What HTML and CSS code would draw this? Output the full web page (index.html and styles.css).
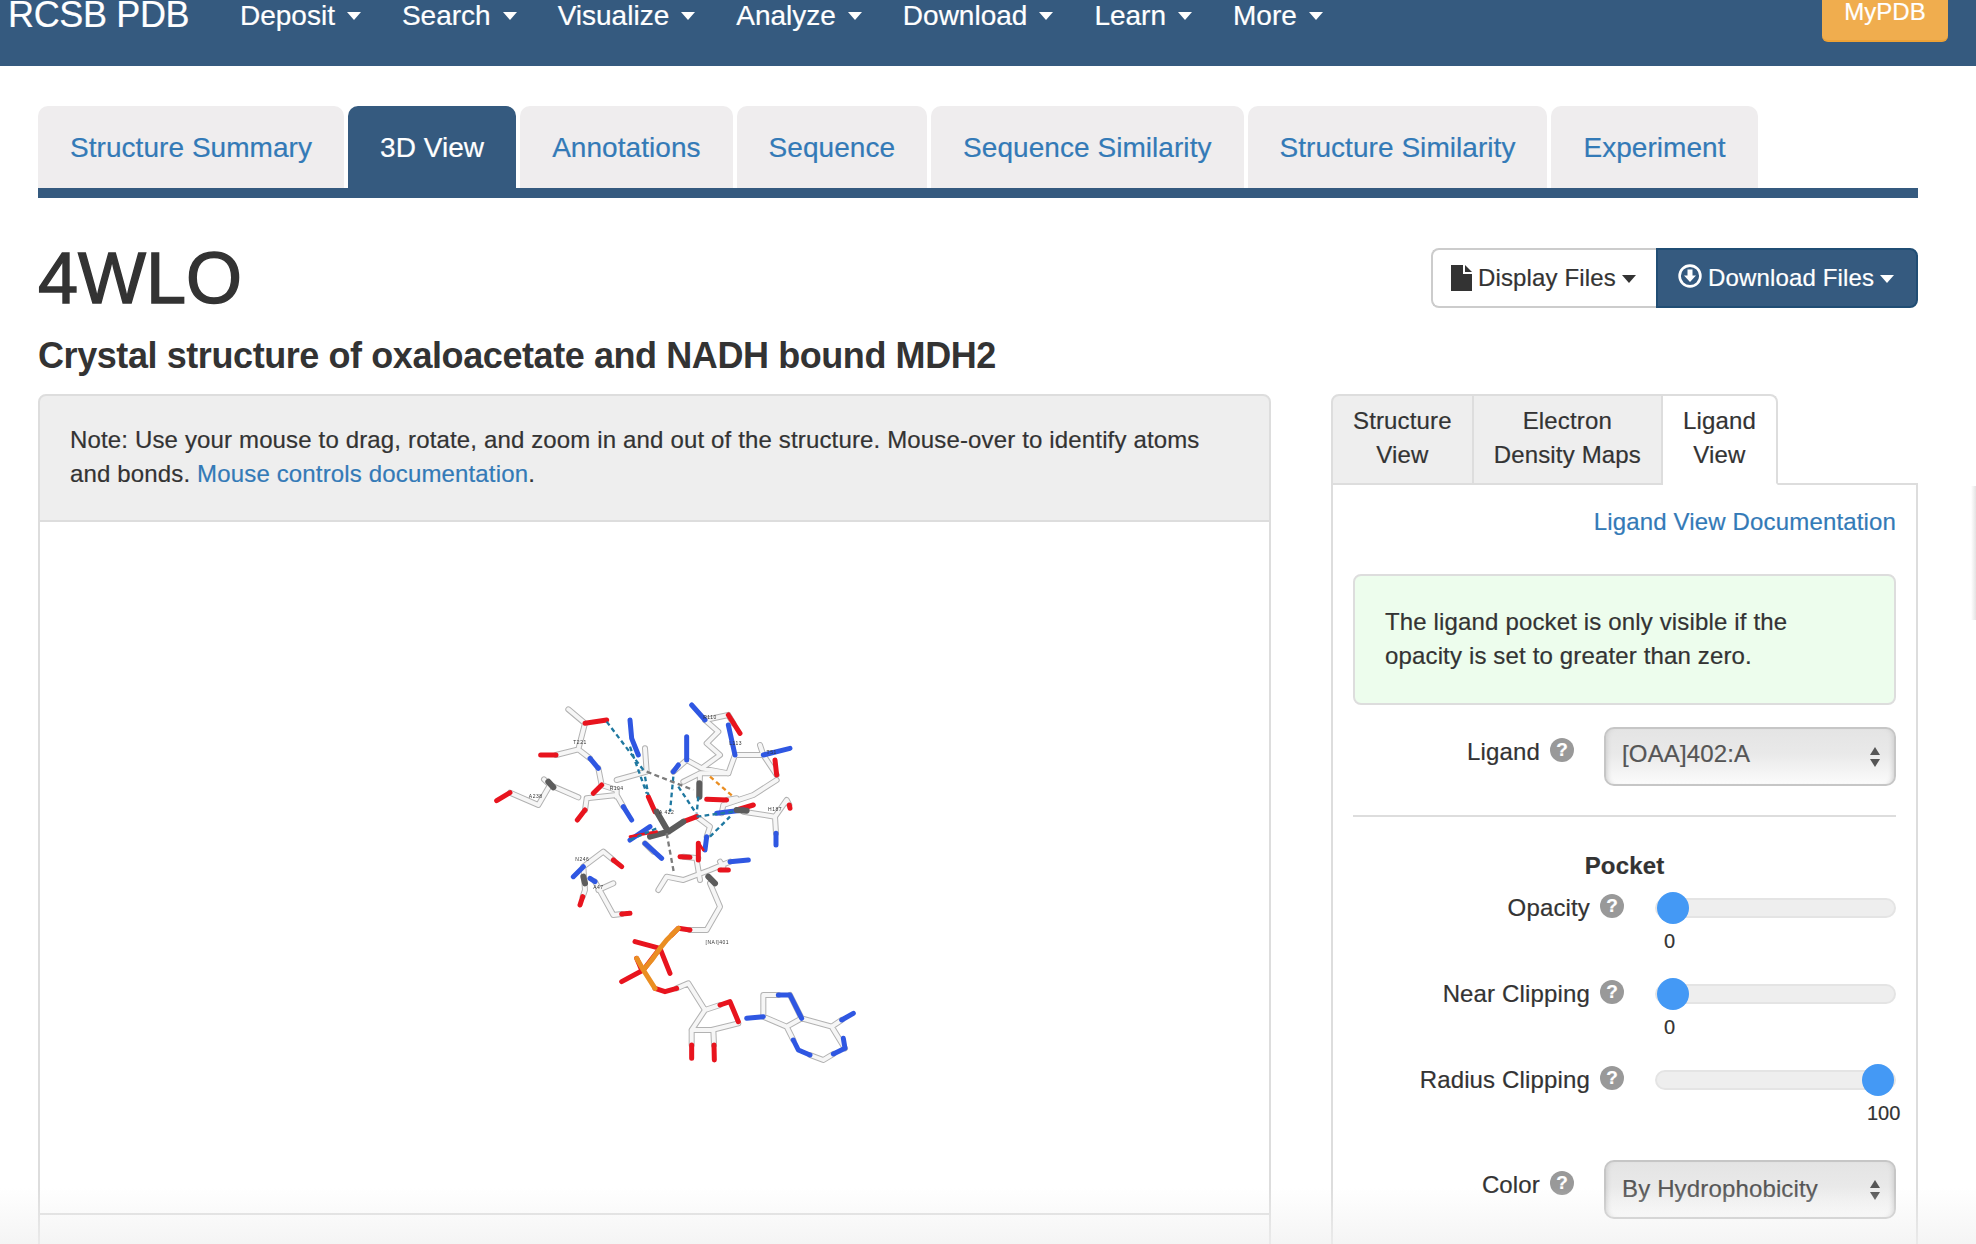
FILE: index.html
```html
<!DOCTYPE html>
<html lang="en">
<head>
<meta charset="utf-8">
<title>4WLO - RCSB PDB</title>
<link rel="stylesheet" href="styles.css">
</head>
<body>
<div class="page">
  <nav class="nav">
    <a class="brand">RCSB PDB</a>
    <ul class="menu">
      <li>Deposit<i class="caret"></i></li>
      <li>Search<i class="caret"></i></li>
      <li>Visualize<i class="caret"></i></li>
      <li>Analyze<i class="caret"></i></li>
      <li>Download<i class="caret"></i></li>
      <li>Learn<i class="caret"></i></li>
      <li>More<i class="caret"></i></li>
    </ul>
    <a class="mypdb">MyPDB</a>
  </nav>

  <main class="container">
    <ul class="main-tabs">
      <li>Structure Summary</li>
      <li class="active">3D View</li>
      <li>Annotations</li>
      <li>Sequence</li>
      <li>Sequence Similarity</li>
      <li>Structure Similarity</li>
      <li>Experiment</li>
    </ul>

    <header class="head">
      <div>
        <h1>4WLO</h1>
        <h2>Crystal structure of oxaloacetate and NADH bound MDH2</h2>
      </div>
      <div class="btn-group">
        <a class="btn btn-light">
          <svg class="ico-file" viewBox="0 0 21 26"><path d="M0 0H12V9H21V26H0Z"/><path d="M14 0L21 7H14Z"/></svg>
          Display Files<i class="caret caret-dark"></i>
        </a>
        <a class="btn btn-dark">
          <svg class="ico-dl" viewBox="0 0 24 24"><circle cx="12" cy="12" r="10.4" fill="none" stroke="#fff" stroke-width="2.6"/><path d="M9.5 5.5H14.500V11.500H18L12 18L6 11.500H9.500Z" fill="#fff"/></svg>
          Download Files<i class="caret"></i>
        </a>
      </div>
    </header>

    <div class="columns">
      <section class="viewer">
        <div class="viewer-note">Note: Use your mouse to drag, rotate, and zoom in and out of the structure. Mouse-over to identify atoms<br>and bonds. <a class="link">Mouse controls documentation</a>.</div>
        <div class="viewer-stage">
          <svg class="mol" viewBox="0 0 1200 1200">
            <defs>
              <g id="sticks">
                <path d="M295 88L345 130L325 208L258 225M325 208L360 235M385 265L395 315L440 330L440 350M350 355L440 345L460 380M350 355L345 390"/>
                <path d="M120 338L205 375L240 315L325 352M240 315L222 298"/>
                <path d="M440 300L530 275L525 205M650 240L610 275M650 240L695 265L750 225L710 190L745 155L705 120M695 265L775 280L795 225L880 225L920 285M880 225L870 195"/>
                <path d="M775 105L705 120M775 105L790 130M640 305L690 280L775 280M690 280L688 350M920 300L850 345L760 375L755 400M770 360L800 355M820 395L915 410L918 460M915 410L950 360L958 375"/>
                <path d="M525 490L550 515M680 410L720 440L710 470M640 530L685 535M565 630L590 590L640 600L720 570L780 545M680 540L690 600M750 545L760 560M720 610L750 680L710 750L660 750"/>
                <path d="M620 925L655 910L705 990L750 975M705 990L665 1050L725 1050L805 1030M665 1050V1095M730 1050L732 1095M880 1010L880 945L925 945M995 1015L950 1040L880 1010M960 945L995 1015L1085 1040L1115 1020M950 1040L970 1080M1020 1125L1060 1140L1090 1122M1125 1105L1085 1040"/>
                <path d="M340 560L400 515L430 540M340 560L345 630L338 650M375 605L430 705L455 702M385 630L430 610"/>
              </g>
            </defs>
            <use href="#sticks" class="st-edge"/>
            <use href="#sticks" class="st-core"/>
            <path class="st-red" d="M345 130L410 120M258 225L212 225M395 315L370 340M345 390L322 420M120 338L80 362M775 105L810 160M920 285L915 240M710 358L770 360M850 375L800 390M685 490L685 540M630 530L660 532M750 570L775 570M660 750L625 745L605 765M570 805L495 785M570 805L600 880M570 805L520 870M520 870L455 905M500 835L515 870M555 925L585 935L620 925M750 975L780 965L805 1025M665 1095V1135M732 1095L733 1140M430 540L455 560M455 702L480 700M338 650L330 675M535 350L555 395M640 425L680 410M958 375L960 385"/>
            <path class="st-blue" d="M360 235L385 265M460 380L485 420M480 120L485 175L505 225M610 275L625 255M650 240V170M705 120L665 75M795 225L775 135M880 225L960 205M918 460V495M740 400L820 390M710 470L705 510M780 545L835 540M830 1015L880 1010M925 945L960 945L995 1015M1115 1020L1150 1000M970 1080L985 1110L1020 1125M1090 1122L1125 1105L1120 1075M340 560L310 590M375 605L360 595M480 480L540 440M525 490L575 535"/>
            <path class="st-dark" d="M560 395L595 455L640 425M595 455L540 470M688 310L688 350M800 390L830 392M340 590L345 610M235 305L250 322M715 590L735 610"/>
            <path class="st-orange" d="M625 745L590 780L570 805M570 805L545 840L520 870L555 925M520 870L500 835"/>
            <path class="st-red-thin" d="M480 470L560 455M700 510L690 495"/>
            <path class="dash-teal" d="M410 125L520 270M480 200L530 340M525 290L535 345M610 290L600 395M625 320L675 395M685 350L680 400M680 410L790 395M720 470L780 410M480 480L560 445"/>
            <path class="dash-grey" d="M530 275L670 330M590 460L612 580"/>
            <path class="dash-orange" d="M720 290L790 350"/>
            <g class="mol-labels">
              <text x="720" y="117">R110</text>
              <text x="797" y="195">L113</text>
              <text x="330" y="192">T221</text>
              <text x="440" y="330">R104</text>
              <text x="197" y="354">A238</text>
              <text x="337" y="542">N246</text>
              <text x="915" y="394">H187</text>
              <text x="590" y="403">A 422</text>
              <text x="905" y="223">T51</text>
              <text x="385" y="628">A47</text>
              <text x="742" y="791">[NAI]401</text>
            </g>
          </svg>
        </div>
        <div class="viewer-foot"></div>
      </section>

      <aside class="side">
        <ul class="side-tabs">
          <li>Structure<br>View</li>
          <li>Electron<br>Density Maps</li>
          <li class="active">Ligand<br>View</li>
        </ul>
        <div class="side-panel">
          <div class="doc"><a class="link">Ligand View Documentation</a></div>
          <div class="alert">The ligand pocket is only visible if the<br>opacity is set to greater than zero.</div>
          <div class="field">
            <div class="field-label">Ligand<span class="help">?</span></div>
            <div class="select">[OAA]402:A<span class="spin"><i class="up"></i><i class="down"></i></span></div>
          </div>
          <hr class="rule">
          <div class="pocket">Pocket</div>
          <div class="slider-row">
            <div class="slider-label">Opacity<span class="help">?</span></div>
            <div class="slider-box">
              <div class="track"><span class="thumb"></span></div>
              <div class="value">0</div>
            </div>
          </div>
          <div class="slider-row">
            <div class="slider-label">Near Clipping<span class="help">?</span></div>
            <div class="slider-box">
              <div class="track"><span class="thumb"></span></div>
              <div class="value">0</div>
            </div>
          </div>
          <div class="slider-row">
            <div class="slider-label">Radius Clipping<span class="help">?</span></div>
            <div class="slider-box">
              <div class="track track-max"><span class="thumb"></span></div>
              <div class="value value-max">100</div>
            </div>
          </div>
          <div class="field field-color">
            <div class="field-label">Color<span class="help">?</span></div>
            <div class="select">By Hydrophobicity<span class="spin"><i class="up"></i><i class="down"></i></span></div>
          </div>
        </div>
      </aside>
    </div>
  </main>
  <div class="edge-shadow"></div>
  <div class="fade"></div>
</div>
</body>
</html>
```
FILE: styles.css
```css
* { box-sizing: border-box; }
html, body { margin: 0; padding: 0; background: #fff; }
body { font-family: "Liberation Sans", Arial, sans-serif; font-size: 24px; line-height: 34px; color: #333; letter-spacing: .15px; -webkit-text-stroke: .2px; }
ul { list-style: none; margin: 0; padding: 0; }
.page { position: relative; height: 1244px; overflow: hidden; }
.link { color: #337ab7; }

.nav { display: flex; align-items: flex-start; height: 66px; background: #355a7f; color: #fff; padding: 0 28px 0 8px; }
.brand { width: 232px; flex: none; font-size: 36px; line-height: 29px; letter-spacing: -.35px; }
.menu { display: flex; gap: 41px; font-size: 28px; line-height: 31px; letter-spacing: 0; }
.menu li { display: flex; align-items: center; white-space: nowrap; }
.caret { display: inline-block; width: 0; height: 0; margin-left: 12px; border-left: 7px solid transparent; border-right: 7px solid transparent; border-top: 8px solid #fff; }
.caret-dark { border-top-color: #333; margin-left: 6px; }
.mypdb { margin-left: auto; width: 126px; height: 42px; background: #f0ad4e; border-bottom: 2px solid #eea236; border-radius: 0 0 6px 6px; text-align: center; font-size: 24px; line-height: 24px; letter-spacing: 0; }

.container { padding: 40px 58px 0 38px; }
.main-tabs { display: flex; gap: 4px; border-bottom: 10px solid #355a7f; font-size: 28px; letter-spacing: .05px; height: 92px; }
.main-tabs li { height: 82px; line-height: 84px; padding: 0 32px; background: #efedee; color: #337ab7; border-radius: 10px 10px 0 0; white-space: nowrap; }
.main-tabs li.active { background: #355a7f; color: #fff; }

.head { display: flex; justify-content: space-between; align-items: flex-start; padding-top: 41px; }
h1 { margin: 0; font-size: 72px; line-height: 79px; font-weight: 400; -webkit-text-stroke: 1.4px #333; letter-spacing: 0; }
h2 { margin: 18px 0 0; font-size: 36px; line-height: 40px; font-weight: 700; letter-spacing: -.42px; -webkit-text-stroke: 0; }
.btn-group { display: flex; margin-top: 9px; height: 60px; line-height: 56px; white-space: nowrap; }
.btn { display: flex; align-items: center; border: 2px solid #ccc; }
.btn-light { width: 225px; padding-left: 18px; background: #fff; border-right: 0; border-radius: 8px 0 0 8px; }
.btn-dark { width: 262px; padding-left: 20px; background: #355a7f; border-color: #204d74; color: #fff; border-radius: 0 8px 8px 0; }
.btn .caret { margin-left: 6px; margin-top: 2px; }
.ico-file { width: 21px; height: 26px; margin-right: 6px; fill: #333; }
.ico-dl { width: 24px; height: 24px; margin-right: 6px; margin-top: -4px; }

.columns { display: flex; gap: 60px; margin-top: 18px; align-items: flex-start; }
.viewer { width: 1233px; flex: none; }
.viewer-note { height: 128px; padding: 27px 30px 0; background: #eee; border: 2px solid #ddd; border-radius: 8px 8px 0 0; white-space: nowrap; }
.viewer-stage { height: 693px; padding: 158px 0 0 430px; border: solid #ddd; border-width: 0 2px 2px; background: #fff; }
.viewer-foot { height: 60px; border: solid #ddd; border-width: 0 2px; }

.mol { display: block; width: 400px; height: 400px; fill: none; stroke-linecap: round; stroke-linejoin: round; filter: blur(.5px); -webkit-text-stroke: 0; }
.st-edge { stroke: #b2b2b2; stroke-width: 18; }
.st-core { stroke: #f6f6f6; stroke-width: 12; }
.st-red { stroke: #e8141e; stroke-width: 15; }
.st-red-thin { stroke: #e8141e; stroke-width: 8; }
.st-blue { stroke: #2f57e2; stroke-width: 15; }
.st-dark { stroke: #5c5c5c; stroke-width: 18; }
.st-orange { stroke: #ea8e22; stroke-width: 15; }
.dash-teal { stroke: #1f78a0; stroke-width: 7; stroke-dasharray: 14 10; stroke-linecap: butt; }
.dash-grey { stroke: #7c7c7c; stroke-width: 7; stroke-dasharray: 15 10; stroke-linecap: butt; }
.dash-orange { stroke: #ea8e22; stroke-width: 7; stroke-dasharray: 14 10; stroke-linecap: butt; }
.mol-labels text { fill: #333; stroke: none; font-size: 15px; letter-spacing: 1.500px; text-anchor: middle; font-family: "Liberation Sans", Arial, sans-serif; }

.side { width: 587px; flex: none; }
.side-tabs { display: flex; height: 91px; margin-bottom: -2px; text-align: center; }
.side-tabs li { padding: 8px 20px 0; height: 91px; background: #eee; border: solid #ddd; border-width: 2px 2px 2px 0; white-space: nowrap; }
.side-tabs li:first-child { border-left-width: 2px; border-radius: 8px 0 0 0; }
.side-tabs li.active { position: relative; z-index: 1; background: #fff; border-bottom-color: #fff; border-left: 0; border-radius: 0 8px 0 0; }
.side-panel { border: 2px solid #ddd; padding: 20px 20px 0 20px; height: 780px; }
.doc { text-align: right; }
.alert { margin-top: 35px; height: 131px; padding: 29px 30px; background: #edfded; border: 2px solid #ddd; border-radius: 8px; }
.field { display: flex; margin-top: 22px; }
.field-label { display: flex; justify-content: flex-end; align-items: flex-start; width: 221px; padding-top: 8px; }
.help { display: inline-block; width: 24px; height: 24px; margin: 3px 0 0 10px; border-radius: 50%; background: #999; color: #fff; font-size: 19px; font-weight: 700; line-height: 24px; text-align: center; letter-spacing: 0; }
.select { position: relative; width: 292px; height: 59px; margin-left: 30px; padding-left: 16px; line-height: 50px; color: #555; border: 2px solid #c6c6c6; border-radius: 10px; background: linear-gradient(#e4e4e4, #e9e9e9 45%, #fbfbfb); box-shadow: inset 5px 0 5px -4px #ccc, inset -5px 0 5px -4px #ccc; }
.field-color .select { line-height: 54px; }
.spin { position: absolute; right: 14px; top: 50%; transform: translateY(-50%); display: flex; flex-direction: column; gap: 4px; }
.spin i { display: block; width: 0; height: 0; border-left: 5.500px solid transparent; border-right: 5.500px solid transparent; }
.spin .up { border-bottom: 8px solid #555; }
.spin .down { border-top: 8px solid #555; }
.rule { height: 2px; margin: 29px 0 0; border: 0; background: #ddd; }
.pocket { margin-top: 32px; text-align: center; font-weight: 700; }
.slider-row { display: flex; margin-top: 9px; margin-bottom: 23px; height: 63px; }
.slider-row + .slider-row { margin-top: 0; }
.slider-label { display: flex; justify-content: flex-end; width: 271px; height: 32px; line-height: 32px; white-space: nowrap; }
.slider-label .help { margin-top: 2px; }
.slider-box { width: 241px; margin-left: 31px; }
.track { display: flex; align-items: center; height: 20px; margin-top: 6px; background: #eee; border: 2px solid #e4e4e4; border-radius: 10px; }
.track-max { justify-content: flex-end; }
.thumb { flex: none; width: 32px; height: 32px; border-radius: 50%; background: #4499f5; }
.value { margin-top: 9px; padding-left: 9px; font-size: 20px; line-height: 28px; letter-spacing: 0; }
.value-max { padding-left: 212px; }
.field-color { margin-top: 33px; }

.edge-shadow { position: absolute; right: 0; top: 486px; width: 5px; height: 134px; background: linear-gradient(90deg, rgba(200,200,200,0), rgba(200,200,200,.5)); pointer-events: none; }
.fade { position: absolute; left: 0; right: 0; bottom: 0; height: 56px; background: linear-gradient(rgba(240,240,240,0), rgba(240,240,240,.7)); pointer-events: none; z-index: 2; }
```
